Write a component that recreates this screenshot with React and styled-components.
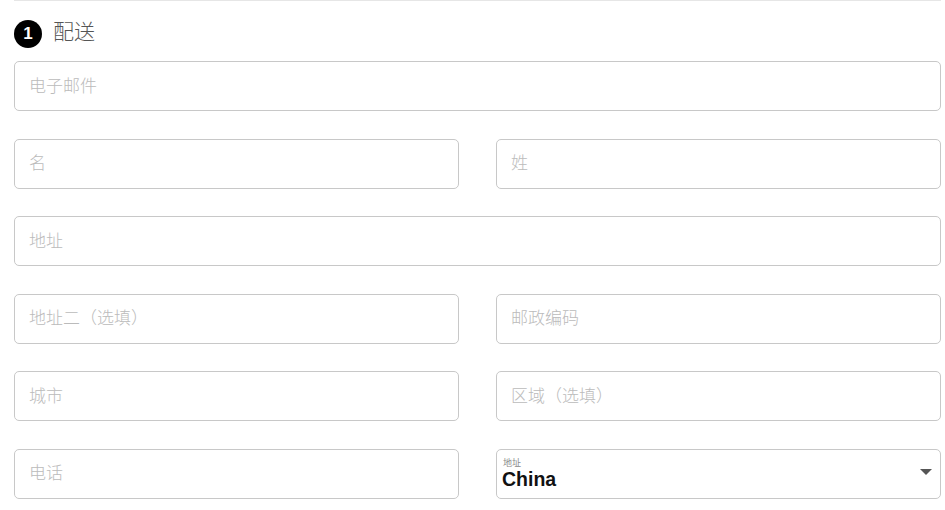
import styled, { createGlobalStyle } from "styled-components";

const GlobalStyle = createGlobalStyle`
  body {
    margin: 0;
    background: #fff;
    font-family: "Liberation Sans", Arial, "Noto Sans CJK SC", sans-serif;
  }
`;

const fields = [
  { placeholder: "电子邮件", wide: true },
  { placeholder: "名" },
  { placeholder: "姓" },
  { placeholder: "地址", wide: true },
  { placeholder: "地址二（选填）" },
  { placeholder: "邮政编码" },
  { placeholder: "城市" },
  { placeholder: "区域（选填）" },
  { placeholder: "电话" },
];

export default function App() {
  return (
    <>
      <GlobalStyle />
      <Section>
        <Heading>
          <StepBadge>1</StepBadge>
          <Title>配送</Title>
        </Heading>
        <FormGrid>
          {fields.map((f) => (
            <Input key={f.placeholder} $wide={f.wide} placeholder={f.placeholder} />
          ))}
          <SelectBox>
            <SelectLabel>地址</SelectLabel>
            <SelectValue>China</SelectValue>
            <Arrow width="12" height="6" viewBox="0 0 12 6">
              <path d="M0 0h12L6 6z" fill="#555" />
            </Arrow>
          </SelectBox>
        </FormGrid>
      </Section>
    </>
  );
}

const Section = styled.div`
  margin: 0 4px 0 14px;
  border-top: 1px solid #e6e6e6;
`;

const Heading = styled.div`
  display: flex;
  align-items: center;
  gap: 11px;
  height: 60px;
  box-sizing: border-box;
`;

const StepBadge = styled.span`
  width: 28px;
  height: 28px;
  border-radius: 50%;
  background: #000;
  color: #fff;
  font-size: 17px;
  font-weight: bold;
  display: flex;
  align-items: center;
  justify-content: center;
  margin-top: 5px;
`;

const Title = styled.h2`
  margin: 0 0 2px;
  font-size: 21px;
  font-weight: 300;
  color: #555;
  font-family: "Noto Sans CJK SC", sans-serif;
`;

const FormGrid = styled.div`
  display: grid;
  grid-template-columns: 1fr 1fr;
  column-gap: 37px;
  row-gap: 27.6px;
`;

const Input = styled.input`
  grid-column: ${(p) => (p.$wide ? "1 / -1" : "auto")};
  height: 50px;
  box-sizing: border-box;
  border: 1px solid #c8c8c8;
  border-radius: 5px;
  padding: 0 14px 4px;
  font-size: 17px;
  font-weight: 300;
  font-family: "Noto Sans CJK SC", sans-serif;
  color: #333;
  outline: none;
  &::placeholder {
    color: #bbbbbb;
  }
`;

const SelectBox = styled.div`
  position: relative;
  height: 50px;
  box-sizing: border-box;
  border: 1px solid #c8c8c8;
  border-radius: 5px;
  padding: 8px 5px 0;
  display: flex;
  flex-direction: column;
`;

const SelectLabel = styled.span`
  font-size: 9px;
  line-height: 10px;
  color: #888;
  padding-left: 1px;
  font-family: "Noto Sans CJK SC", sans-serif;
`;

const SelectValue = styled.span`
  font-size: 19.5px;
  line-height: 22px;
  font-weight: bold;
  color: #111;
`;

const Arrow = styled.svg`
  position: absolute;
  right: 8px;
  top: 19px;
`;
